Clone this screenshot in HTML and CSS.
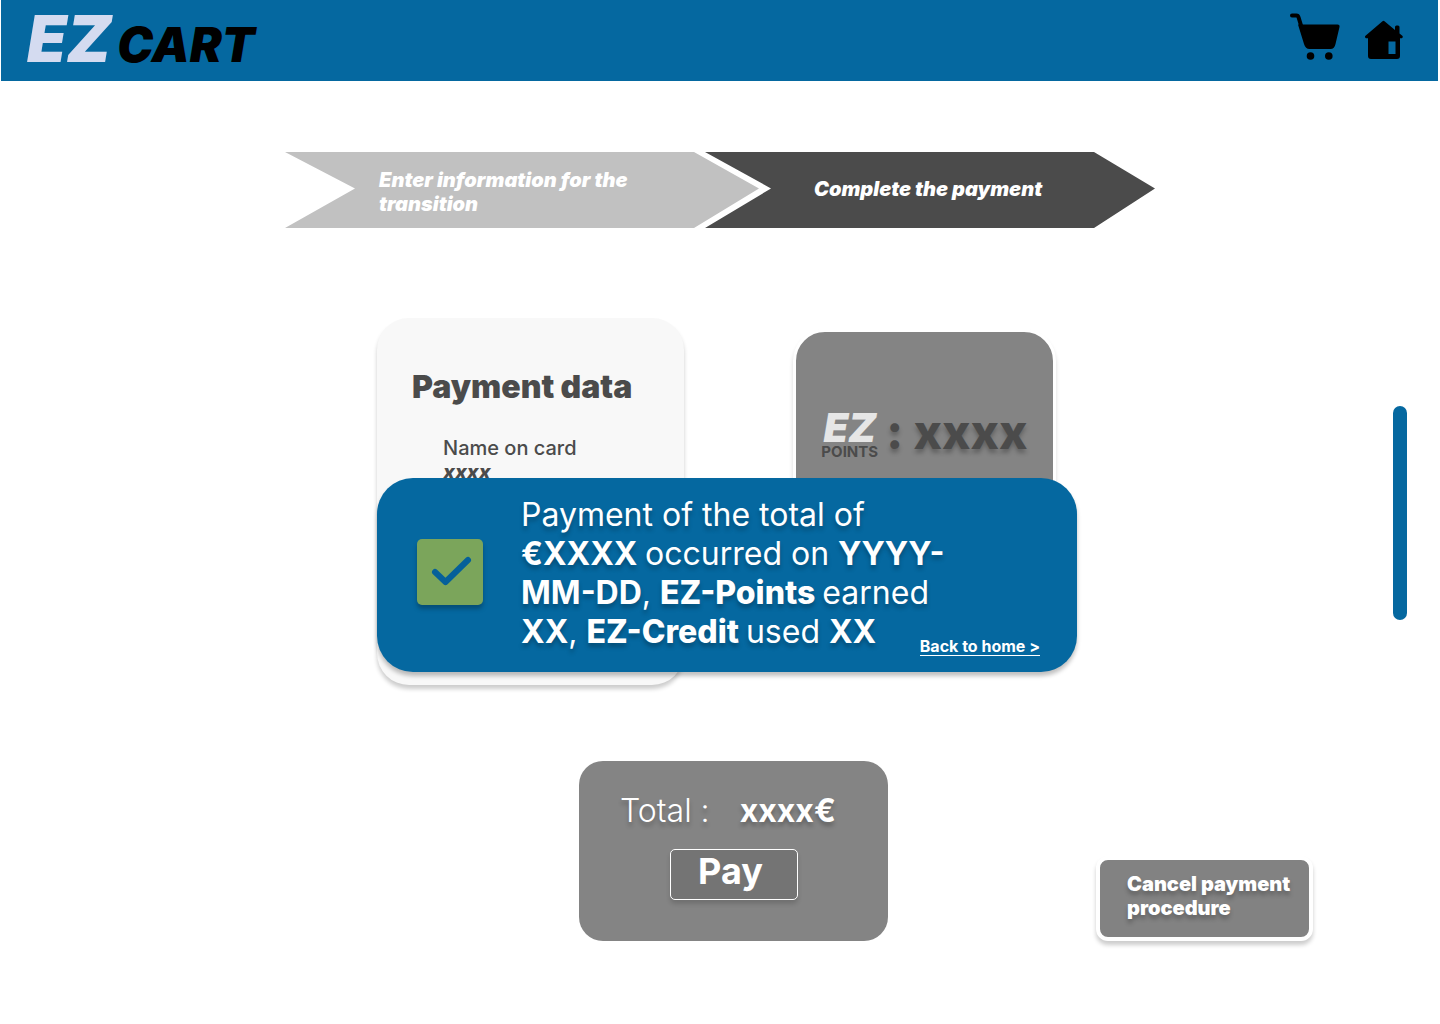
FILE: index.html
```html
<!DOCTYPE html>
<html lang="en">
<head>
<meta charset="utf-8">
<meta name="viewport" content="width=device-width, initial-scale=1">
<title>EZ Cart – Payment</title>
<link rel="stylesheet" href="styles.css">
</head>
<body>
<header class="topbar">
  <a class="logo" href="#"><span class="logo-ez">EZ</span><span class="logo-cart">CART</span></a>
  <nav class="topnav">
    <a href="#" aria-label="Cart">
      <svg width="50" height="48" viewBox="0 0 50 48">
        <path d="M2 2.500H6.500Q8 2.500 8.600 4.500L11.500 14" fill="none" stroke="#000" stroke-width="4" stroke-linecap="round" stroke-linejoin="round"/>
        <path d="M8 11.500H47.500Q50 11.500 49.500 14L45.500 31Q44.500 36 40.500 36H19.500Q15.500 36 14 31Z"/>
        <circle cx="20.500" cy="43" r="3.800"/><circle cx="38.800" cy="43" r="3.800"/>
      </svg>
    </a>
    <a href="#" aria-label="Home">
      <svg width="40" height="40" viewBox="0 0 40 40">
        <path fill-rule="evenodd" d="M18.500 1.300Q19.500 .3 20.500 1.300L31 10V7Q31 5.500 32.500 5.500H34Q35.500 5.500 35.500 7V13.500L38.600 16Q39.500 17.500 37.800 18.300H36V36Q36 39 33 39H7Q4 39 4 36V18.300H2Q.2 17.500 1.200 16ZM24.500 21.500V34H31.500V21.500Z"/>
      </svg>
    </a>
  </nav>
</header>

<ol class="steps">
  <li class="step step-done">Enter information for the transition</li>
  <li class="step step-current" aria-current="step">Complete the payment</li>
</ol>

<main>
  <div class="checkout">
    <section class="payment-card">
      <h1>Payment data</h1>
      <dl>
        <dt>Name on card</dt>
        <dd>xxxx</dd>
      </dl>
    </section>
    <section class="points-card">
      <div class="points-logo"><span class="points-ez">EZ</span><span class="points-word">POINTS</span></div>
      <span class="points-value">: xxxx</span>
    </section>
    <div class="notice" role="alertdialog" aria-label="Payment confirmation">
      <svg class="notice-check" width="66" height="66" viewBox="0 0 66 66">
        <rect width="66" height="66" rx="5" fill="#7ba55b"/>
        <path d="M18 33L28.500 43L51 21" fill="none" stroke="#05609a" stroke-width="6" stroke-linecap="round" stroke-linejoin="round"/>
      </svg>
      <p class="notice-text">Payment of the total of <b>€XXXX </b>occurred on <b>YYYY-MM-DD</b>, <strong>EZ-Points </strong>earned <b>XX</b>, <strong>EZ-Credit </strong>used <b>XX</b></p>
      <a class="notice-link" href="#">Back to home &gt;</a>
    </div>
  </div>

  <div class="actions">
    <section class="total-card">
      <p class="total"><span>Total :</span><b>xxxx€</b></p>
      <button class="pay" type="button">Pay</button>
    </section>
    <button class="cancel" type="button">Cancel payment procedure</button>
  </div>
</main>
<div class="scroll-thumb"></div>
</body>
</html>
```
FILE: styles.css
```css
* { box-sizing: border-box; }

body {
  margin: 0;
  background: #fff;
  color: #4b4b4b;
  font-family: Inter, "Liberation Sans", sans-serif;
  font-optical-sizing: none;
}

h1, p, dl, dd, ol { margin: 0; padding: 0; }
button { font-family: inherit; cursor: pointer; }

.topbar {
  display: flex;
  align-items: center;
  justify-content: space-between;
  height: 81px;
  margin: 0 2px 0 1px;
  padding: 0 34px 4px 26px;
  background: #0568a0;
}

.logo {
  display: flex;
  align-items: baseline;
  gap: 6px;
  font-style: italic;
  font-weight: 900;
  text-decoration: none;
}
.logo-ez { color: #d4dbf0; font-size: 64px; line-height: 78px; }
.logo-cart { color: #000; font-size: 48px; }

.topnav { display: flex; align-items: center; gap: 24px; padding-top: 2px; }
.topnav svg { display: block; }
.topnav a:first-child { padding-bottom: 6px; }

.steps {
  display: flex;
  justify-content: center;
  margin-top: 71px;
  list-style: none;
}
.step {
  display: flex;
  align-items: center;
  height: 76px;
  color: #fff;
  font-size: 20px;
  font-style: italic;
  font-weight: 900;
  line-height: 24px;
}
.step-done {
  width: 474px;
  padding: 4px 100px 0 94px;
  background: #c1c1c1;
  clip-path: polygon(0 0, calc(100% - 65px) 0, 100% 48%, calc(100% - 65px) 100%, 0 100%, 70px 48%);
}
.step-current {
  width: 450px;
  margin-left: -54px;
  padding: 0 0 2px 109px;
  background: #4b4b4b;
  clip-path: polygon(0 0, calc(100% - 61px) 0, 100% 48%, calc(100% - 61px) 100%, 0 100%, 66px 48%);
}

main { padding-left: 14px; }

.checkout {
  position: relative;
  display: flex;
  justify-content: space-between;
  width: 700px;
  margin: 90px auto 0;
  padding-right: 21px;
}

.payment-card {
  width: 307px;
  min-height: 367px;
  padding: 49px 35px;
  border-radius: 32px;
  background: #f8f8f8;
  box-shadow: 0 4px 4px rgba(0, 0, 0, .2);
}
.payment-card h1 {
  font-size: 32px;
  font-weight: 900;
  line-height: 40px;
  white-space: nowrap;
}
.payment-card dl {
  margin: 29px 0 0 31px;
  font-size: 20px;
  line-height: 24px;
}
.payment-card dt { font-weight: 500; }
.payment-card dd { font-style: italic; font-weight: 800; }

.points-card {
  display: flex;
  align-self: flex-start;
  justify-content: center;
  width: 263px;
  height: 260px;
  margin-top: 11px;
  padding-top: 76px;
  border: 3px solid #fff;
  border-radius: 32px;
  background: #848484;
  box-shadow: 0 4px 4px rgba(0, 0, 0, .15);
  gap: 8px;
}
.points-logo { display: flex; flex-direction: column; align-items: center; }
.points-ez {
  color: #e6e6e6;
  font-size: 40px;
  font-style: italic;
  font-weight: 900;
  line-height: 40px;
}
.points-word { font-size: 15px; font-weight: 700; line-height: 8px; }
.points-value {
  font-size: 48px;
  font-weight: 800;
  line-height: 48px;
  text-shadow: 0 4px 4px rgba(0, 0, 0, .25);
}

.notice {
  position: absolute;
  top: 160px;
  left: 0;
  display: flex;
  align-items: flex-start;
  width: 100%;
  height: 194px;
  padding: 17px 37px 0 40px;
  border-radius: 36px;
  background: #0568a0;
  box-shadow: 0 4px 4px rgba(0, 0, 0, .25);
  color: #fff;
}
.notice-check {
  flex: none;
  margin: 44px 38px 0 0;
  filter: drop-shadow(0 4px 2px rgba(0, 0, 0, .25));
}
.notice-text {
  width: 440px;
  font-size: 32px;
  line-height: 39px;
  text-shadow: 0 4px 4px rgba(0, 0, 0, .25);
}
.notice-text strong { font-weight: 800; }
.notice-link {
  position: absolute;
  right: 37px;
  bottom: 16px;
  border-bottom: 1px solid #fff;
  color: #fff;
  font-size: 16px;
  font-weight: 700;
  line-height: 18px;
  text-decoration: none;
}

.actions {
  display: grid;
  grid-template-columns: 1fr 309px 1fr;
  align-items: end;
  margin-top: 76px;
  padding: 0 0 83px 13px;
}
.total-card {
  display: flex;
  grid-column: 2;
  flex-direction: column;
  align-items: center;
  height: 180px;
  padding-top: 30px;
  border-radius: 24px;
  background: #848484;
  color: #fff;
  gap: 18px;
}
.total {
  display: flex;
  align-self: stretch;
  padding-left: 41px;
  font-size: 32px;
  font-weight: 300;
  line-height: 40px;
  text-shadow: 0 4px 4px rgba(0, 0, 0, .25);
  gap: 30px;
}
.total b { font-weight: 700; }
.pay {
  width: 128px;
  height: 51px;
  padding: 0 6px 8px 0;
  border: 1px solid #fff;
  border-radius: 5px;
  background: #747474;
  box-shadow: 0 4px 4px rgba(0, 0, 0, .15);
  color: #fff;
  font-size: 36px;
  font-weight: 700;
  line-height: 42px;
}
.cancel {
  justify-self: end;
  width: 217px;
  height: 85px;
  margin-right: 127px;
  padding: 0 8px 6px 27px;
  border: 4px solid #fff;
  border-radius: 12px;
  background: #828282;
  box-shadow: 0 4px 4px rgba(0, 0, 0, .2);
  color: #fff;
  font-size: 20px;
  font-weight: 900;
  line-height: 24px;
  text-align: left;
  text-shadow: 0 4px 4px rgba(0, 0, 0, .25);
}

.scroll-thumb {
  position: fixed;
  top: calc(50% - 106px);
  right: 33px;
  width: 14px;
  height: 214px;
  border-radius: 7px;
  background: #0568a0;
}
```
